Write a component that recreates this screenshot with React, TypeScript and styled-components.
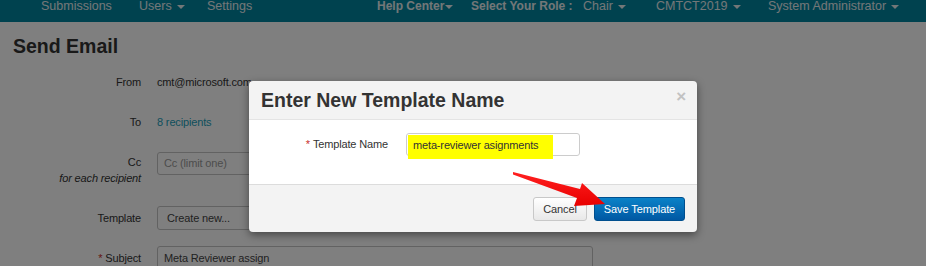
import React from "react";
import styled, { createGlobalStyle } from "styled-components";

const GlobalStyle = createGlobalStyle`
  html, body {
    margin: 0;
    padding: 0;
    background: #ffffff;
    overflow: hidden;
  }
  body {
    font-family: "Liberation Sans", Arial, sans-serif;
    color: #333;
  }
`;

const Page = styled.div`
  width: 926px;
  height: 266px;
  position: relative;
  overflow: hidden;
`;

const NavBar = styled.nav`
  height: 22px;
  background: #00849f;
  display: flex;
  align-items: flex-start;
  padding-left: 41px;
`;

const NavItem = styled.div<{ $w?: number; $bold?: boolean }>`
  flex: 0 0 ${(p) => (p.$w ? `${p.$w}px` : "auto")};
  display: flex;
  align-items: center;
  height: 13px;
  font-size: ${(p) => (p.$bold ? "12px" : "12.5px")};
  font-weight: ${(p) => (p.$bold ? 700 : 400)};
  color: #e6eef0;
  white-space: nowrap;
  line-height: 13px;
`;

const Caret = styled.span<{ $tight?: boolean }>`
  display: inline-block;
  width: 0;
  height: 0;
  margin-left: ${(p) => (p.$tight ? "1px" : "5px")};
  border-top: 4px solid #e6eef0;
  border-left: 4px solid transparent;
  border-right: 4px solid transparent;
`;

const Content = styled.main`
  padding: 0 13px;
`;

const Title = styled.h1`
  margin: 12px 0 12px;
  font-size: 19.5px;
  line-height: 24px;
  font-weight: 700;
  color: #333;
`;

const Form = styled.div`
  display: grid;
  grid-template-columns: 128px 436px;
  column-gap: 16px;
  row-gap: 16px;
  font-size: 11px;
  letter-spacing: -0.15px;
`;

const Label = styled.div`
  height: 24px;
  line-height: 24px;
  text-align: right;
  color: #333;
`;

const LabelStack = styled.div`
  height: 40px;
  padding-top: 4px;
  box-sizing: border-box;
  text-align: right;
  line-height: 16px;
  color: #333;
`;

const Note = styled.div`
  font-style: italic;
`;

const Star = styled.span`
  color: #c9302c;
  margin-right: 3px;
`;

const Value = styled.div`
  height: 24px;
  line-height: 24px;
  color: #333;
`;

const Link = styled.a`
  color: #22a0ba;
  text-decoration: none;
`;

const Field = styled.div<{ $placeholder?: boolean; $h?: number; $pad?: number }>`
  box-sizing: border-box;
  height: ${(p) => p.$h ?? 24}px;
  margin-top: ${(p) => (p.$h && p.$h < 24 ? 2 : 0)}px;
  width: 436px;
  border: 1px solid #c4c4c4;
  border-radius: 3px;
  background: #fff;
  padding: 0 ${(p) => p.$pad ?? 6}px;
  line-height: ${(p) => (p.$h ? p.$h - 2 : 22)}px;
  color: ${(p) => (p.$placeholder ? "#9a9a9a" : "#444")};
`;

const Backdrop = styled.div`
  position: absolute;
  inset: 0;
  background: rgba(0, 0, 0, 0.502);
`;

const Modal = styled.div`
  position: absolute;
  left: 249px;
  top: 81px;
  width: 448px;
  background: #f3f3f3;
  border-radius: 4px;
  box-shadow: 0 3px 8px rgba(0, 0, 0, 0.45);
  overflow: hidden;
  font-size: 11px;
  letter-spacing: -0.15px;
`;

const ModalHeader = styled.div`
  height: 38px;
  display: flex;
  align-items: center;
  justify-content: space-between;
  padding: 0 11px 0 12px;
  border-bottom: 1px solid #e4e4e4;
`;

const ModalTitle = styled.h3`
  margin: 0;
  font-size: 19.5px;
  font-weight: 700;
  letter-spacing: 0;
  color: #333;
`;

const Close = styled.span`
  font-size: 17px;
  font-weight: 700;
  color: #c2c2c2;
  margin-top: -6px;
`;

const ModalBody = styled.div`
  height: 65px;
  background: #fff;
  border-bottom: 1px solid #dcdcdc;
  display: grid;
  grid-template-columns: 139px 174px;
  column-gap: 18px;
  align-items: start;
  padding-top: 13px;
  box-sizing: border-box;
`;

const ModalLabel = styled.div`
  line-height: 23px;
  text-align: right;
  color: #333;
`;

const InputBox = styled.div`
  position: relative;
  box-sizing: border-box;
  height: 23px;
  border: 1px solid #cccccc;
  border-radius: 3px;
  background: #fff;
`;

const Highlight = styled.span`
  position: absolute;
  left: 1px;
  top: 1px;
  width: 145px;
  height: 24px;
  padding-left: 5px;
  box-sizing: border-box;
  background: #ffff00;
  line-height: 21px;
  color: #333;
  white-space: nowrap;
`;

const ModalFooter = styled.div`
  height: 47px;
  display: flex;
  align-items: center;
  justify-content: flex-end;
  gap: 7px;
  padding: 0 12px;
`;

const Button = styled.button<{ $primary?: boolean; $w: number }>`
  width: ${(p) => p.$w}px;
  height: 24px;
  padding: 0;
  font-family: inherit;
  font-size: 11px;
  letter-spacing: -0.1px;
  border-radius: 3px;
  cursor: pointer;
  color: ${(p) => (p.$primary ? "#fff" : "#333")};
  border: 1px solid ${(p) => (p.$primary ? "#004f8e" : "#c8c8c8")};
  background: ${(p) =>
    p.$primary
      ? "linear-gradient(#0a82c8, #0058a3)"
      : "linear-gradient(#ffffff, #e8e8e8)"};
`;

const Arrow = styled.svg`
  position: absolute;
  left: 505px;
  top: 165px;
  width: 110px;
  height: 50px;
  pointer-events: none;
`;

export default function App() {
  return (
    <Page>
      <GlobalStyle />
      <NavBar>
        <NavItem $w={98}>Submissions</NavItem>
        <NavItem $w={68}>
          Users <Caret />
        </NavItem>
        <NavItem $w={170}>Settings</NavItem>
        <NavItem $w={94} $bold>
          Help Center
          <Caret $tight />
        </NavItem>
        <NavItem $w={112} $bold>
          Select Your Role :
        </NavItem>
        <NavItem $w={73}>
          Chair <Caret />
        </NavItem>
        <NavItem $w={112}>
          CMTCT2019 <Caret />
        </NavItem>
        <NavItem>
          System Administrator <Caret />
        </NavItem>
      </NavBar>

      <Content>
        <Title>Send Email</Title>
        <Form>
          <Label>From</Label>
          <Value>cmt@microsoft.com</Value>

          <Label>To</Label>
          <Value>
            <Link href="#">8 recipients</Link>
          </Value>

          <LabelStack>
            <div>Cc</div>
            <Note>for each recipient</Note>
          </LabelStack>
          <Field $placeholder $h={23}>
            Cc (limit one)
          </Field>

          <Label>Template</Label>
          <Field $pad={9}>Create new...</Field>

          <Label>
            <Star>*</Star>Subject
          </Label>
          <Field>Meta Reviewer assign</Field>
        </Form>
      </Content>

      <Backdrop />

      <Modal>
        <ModalHeader>
          <ModalTitle>Enter New Template Name</ModalTitle>
          <Close>×</Close>
        </ModalHeader>
        <ModalBody>
          <ModalLabel>
            <Star>*</Star>Template Name
          </ModalLabel>
          <InputBox>
            <Highlight>meta-reviewer asignments</Highlight>
          </InputBox>
        </ModalBody>
        <ModalFooter>
          <Button $w={54}>Cancel</Button>
          <Button $w={91} $primary>
            Save Template
          </Button>
        </ModalFooter>
      </Modal>

      <Arrow viewBox="505 165 110 50">
        <defs>
          <linearGradient id="arrowFill" x1="0" y1="0" x2="0" y2="1">
            <stop offset="0" stopColor="#ff2020" />
            <stop offset="1" stopColor="#e80000" />
          </linearGradient>
        </defs>
        <polygon
          points="513,172 580,189 582,183 605,204 574,206 577,198 513,174.5"
          fill="url(#arrowFill)"
        />
      </Arrow>
    </Page>
  );
}
